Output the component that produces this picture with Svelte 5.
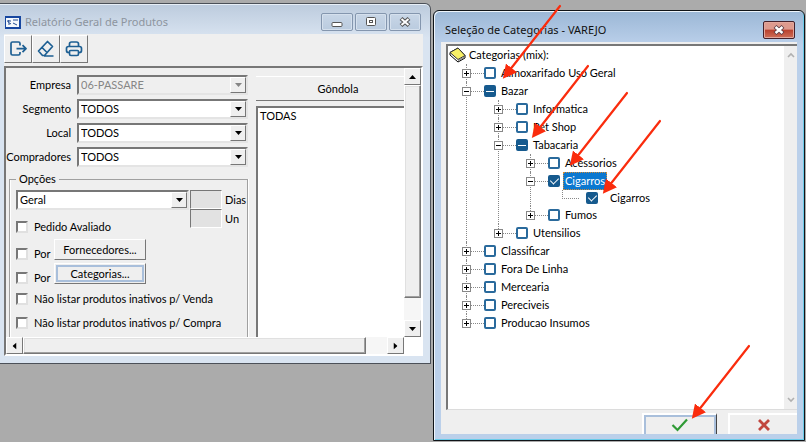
<script>
  const filters = [
    { id: 'empresa', label: 'Empresa', value: '06-PASSARE', disabled: true },
    { id: 'segmento', label: 'Segmento', value: 'TODOS' },
    { id: 'local', label: 'Local', value: 'TODOS' },
    { id: 'compradores', label: 'Compradores', value: 'TODOS' }
  ];

  const tree = [
    { name: 'Almoxarifado Uso Geral' },
    {
      name: 'Bazar', open: true, state: 'some',
      children: [
        { name: 'Informatica' },
        { name: 'Pet Shop' },
        {
          name: 'Tabacaria', open: true, state: 'some',
          children: [
            { name: 'Acessorios' },
            {
              name: 'Cigarros', open: true, state: 'all', selected: true,
              children: [{ name: 'Cigarros', state: 'all', leaf: true }]
            },
            { name: 'Fumos' }
          ]
        },
        { name: 'Utensilios' }
      ]
    },
    { name: 'Classificar' },
    { name: 'Fora De Linha' },
    { name: 'Mercearia' },
    { name: 'Pereciveis' },
    { name: 'Producao Insumos' }
  ];

  // Shaft of each arrow; the head extends past its end.
  const arrows = [
    [560, 6, 509, 71],
    [588, 66, 538, 130],
    [627, 93, 576, 158],
    [660, 121, 609, 186],
    [749, 346, 698, 411]
  ];
</script>

{#snippet triangle(dir)}
  <svg class="tri {dir}" viewBox="0 0 7 4" width="7" height="4" aria-hidden="true"><path d="M0 0h7L3.5 4z" fill="currentColor" /></svg>
{/snippet}

{#snippet combo(id, value, disabled)}
  <span class="combo" class:disabled>
    <select {id} {disabled} aria-label={id === 'tipo' ? 'Tipo' : undefined}><option>{value}</option></select>
    <span class="drop">{@render triangle('down')}</span>
  </span>
{/snippet}

{#snippet branch(nodes)}
  <ul>
    {#each nodes as node}
      <li class:leaf={node.leaf}>
        <div class="node">
          {#if !node.leaf}
            <button class="expander" aria-label={node.open ? 'Recolher' : 'Expandir'}>
              <svg viewBox="0 0 7 7" width="7" height="7"><path d={node.open ? 'M1 3.5h5' : 'M1 3.5h5M3.5 1v5'} stroke="#000" /></svg>
            </button>
          {/if}
          <span class="link"></span>
          <label>
            <input type="checkbox" class="mark" class:some={node.state === 'some'} checked={node.state === 'all'} indeterminate={node.state === 'some'} />
            <span class="name" class:selected={node.selected}>{node.name}</span>
          </label>
        </div>
        {#if node.children}{@render branch(node.children)}{/if}
      </li>
    {/each}
  </ul>
{/snippet}

<main class="desktop">
  <section class="window report">
    <header>
      <svg width="16" height="13" viewBox="0 0 16 13" aria-hidden="true">
        <rect width="16" height="13" fill="#1747a0" /><rect x="1" y="2" width="13" height="9" fill="#f5f9fd" />
        <path d="M2 5h4M8 4h5M3 8h2M4 4l-1 2 3 2M8 7l4 2" stroke="#234b91" fill="none" />
      </svg>
      <h1>Relatório Geral de Produtos</h1>
      <div class="controls">
        <button aria-label="Minimizar"><svg width="12" height="12" viewBox="0 0 12 12"><rect x="1" y="6.5" width="10" height="4" rx="1" fill="#fff" stroke="#555" /></svg></button>
        <button aria-label="Maximizar"><svg width="12" height="12" viewBox="0 0 12 12"><rect x="1.5" y="1.5" width="9" height="8" rx="1" fill="#fff" stroke="#555" /><rect x="4.5" y="4.5" width="3" height="2" fill="#fff" stroke="#555" /></svg></button>
        <button aria-label="Fechar"><svg width="12" height="12" viewBox="0 0 12 12"><path d="M2 2.500l8 7M10 2.500l-8 7" stroke="#555" stroke-width="4.200" /><path d="M2.500 3l7 6M9.500 3l-7 6" stroke="#fff" stroke-width="2" /></svg></button>
      </div>
    </header>

    <div class="panel">
      <div class="toolbar">
        <button aria-label="Sair"><svg width="18" height="18" viewBox="0 0 18 18"><path d="M11 5.500V3.500Q11 2 9.500 2H3.500Q2 2 2 3.500V13.500Q2 15 3.500 15H9.500Q11 15 11 13.500V12M7.500 8.700H17M13.500 5.200L17 8.700L13.500 12.200" /></svg></button>
        <button aria-label="Limpar"><svg width="18" height="18" viewBox="0 0 18 18"><path d="M1.500 11L10.500 1.500L15.500 6.500L7.500 15.500H5.500L1.500 11ZM5 7.500L10.500 13M7 16H16.500" /></svg></button>
        <button aria-label="Imprimir"><svg width="18" height="18" viewBox="0 0 18 18"><path d="M4.500 6.500V4Q4.500 2 6.500 2H11.500Q13.500 2 13.500 4V6.500M4.500 12.500H3.500Q1.500 12.500 1.500 10.500V8.500Q1.500 6.500 3.500 6.500H14.500Q16.500 6.500 16.500 8.500V10.500Q16.500 12.500 14.500 12.500H13.500M5.500 10.500H12.500Q13.500 10.500 13.500 11.500V14Q13.500 15.500 12 15.500H6Q4.500 15.500 4.500 14V11.500Q4.500 10.500 5.500 10.500Z" /></svg></button>
      </div>

      <div class="scroller">
        <div class="view">
          <form class="form">
            <div class="filters">
              {#each filters as f}
                <label for={f.id}>{f.label}</label>
                {@render combo(f.id, f.value, f.disabled)}
              {/each}
            </div>
            <fieldset>
              <legend>Opções</legend>
              <div class="period">
                <div class="kind">
                  {@render combo('tipo', 'Geral', false)}
                  <label class="check"><input type="checkbox" />Pedido Avaliado</label>
                </div>
                <div class="units">
                  <label><input type="text" disabled />Dias</label>
                  <label><input type="text" disabled />Un</label>
                </div>
              </div>
              <div class="by"><label class="check"><input type="checkbox" />Por</label><button type="button">Fornecedores...</button></div>
              <div class="by"><label class="check"><input type="checkbox" />Por</label><button type="button" class="focused">Categorias...</button></div>
              <label class="check"><input type="checkbox" />Não listar produtos inativos p/ Venda</label>
              <label class="check"><input type="checkbox" />Não listar produtos inativos p/ Compra</label>
            </fieldset>
          </form>
          <div class="shelf">
            <h2>Gôndola</h2>
            <div class="list">TODAS</div>
          </div>
        </div>
        <div class="bar vertical">
          <button aria-label="Subir">{@render triangle('up')}</button>
          <div class="thumb"></div>
          <button aria-label="Descer">{@render triangle('down')}</button>
        </div>
        <div class="bar horizontal">
          <button aria-label="Esquerda">{@render triangle('left')}</button>
          <div class="thumb"></div>
          <button aria-label="Direita">{@render triangle('right')}</button>
        </div>
      </div>
    </div>
  </section>

  <section class="window dialog">
    <header>
      <h1>Seleção de Categorias - VAREJO</h1>
      <div class="controls">
        <button class="close" aria-label="Fechar"><svg width="12" height="12" viewBox="0 0 12 12"><path d="M2 2.500l8 7M10 2.500l-8 7" stroke="#5c3c44" stroke-width="4.200" /><path d="M2.500 3l7 6M9.500 3l-7 6" stroke="#fff" stroke-width="2.400" /></svg></button>
      </div>
    </header>
    <div class="panel">
      <div class="treebox">
        <div class="tree">
          <div class="root">
            <svg width="17" height="16" viewBox="0 0 17 16" aria-hidden="true">
              <path d="M1 5.500L9 1L16 8.500V11L9 15L1 8z" fill="#fff" stroke="#000" />
              <path d="M1 5.500L9 1L16 8.500L9 12.500z" fill="#f7ef67" stroke="#333" /><path d="M9 13.500L16 10" stroke="#777" />
            </svg>
            <span>Categorias (mix):</span>
          </div>
          {@render branch(tree)}
        </div>
        <div class="rail">
          <svg width="8" height="6" viewBox="0 0 8 6"><path d="M1 5l3-3 3 3" /></svg>
          <svg width="8" height="6" viewBox="0 0 8 6"><path d="M1 1l3 3 3-3" /></svg>
        </div>
      </div>
      <footer>
        <button class="ok" aria-label="Confirmar"><svg width="18" height="14" viewBox="0 0 18 14"><path d="M1.500 7L6.500 12L16 1.500" stroke="#2f9a35" stroke-width="2.200" fill="none" /></svg></button>
        <button class="cancel" aria-label="Cancelar"><svg width="14" height="14" viewBox="0 0 14 14"><path d="M2 2l10 10M12 2L2 12" stroke="#c1463f" stroke-width="2.800" /></svg></button>
      </footer>
    </div>
  </section>

  <svg class="arrows" width="806" height="442" viewBox="0 0 806 442" aria-hidden="true">
    <defs>
      <marker id="head" markerUnits="userSpaceOnUse" markerWidth="14" markerHeight="14" refX="4" refY="7" orient="auto"><path d="M0 0L14 7L0 14z" fill="#fa2c0d" /></marker>
    </defs>
    {#each arrows as [x1, y1, x2, y2]}
      <line {x1} {y1} {x2} {y2} marker-end="url(#head)" />
    {/each}
  </svg>
</main>

<style>
  :global(body) { background: #ababab; }
  * { box-sizing: border-box; }
  .desktop {
    position: relative;
    display: grid;
    grid-template-columns: 431fr 372fr;
    gap: 2px;
    align-items: start;
    min-height: 100vh;
    padding-right: 1px;
    overflow: hidden;
    background: #ababab;
    color: #000;
    font: 11px/16px Lato, "Liberation Sans", sans-serif;
  }
  button, select, input { font: inherit; color: inherit; margin: 0; padding: 0; border-radius: 0; }
  button { display: flex; align-items: center; justify-content: center; border: 0; background: #efefef; }
  svg { display: block; flex: none; }
  h1, h2 { margin: 0; font-weight: 400; white-space: nowrap; }

  .window { display: flex; flex-direction: column; min-width: 0; }
  header { display: flex; align-items: center; height: 30px; }
  h1 { font: 11px/18px "Noto Sans", sans-serif; }
  .controls { display: flex; gap: 2px; margin-left: auto; }
  .controls button {
    width: 32px; height: 18px;
    border: 1px solid #8496ae; border-radius: 2px;
    background: linear-gradient(#c8d6e7, #bacbdf);
    box-shadow: inset 0 0 0 1px #d5e0ed;
  }
  .controls .close {
    border-color: #43202a;
    background: linear-gradient(#dd9a8e 0 45%, #b9402d 50%, #cf6f58);
    box-shadow: inset 0 0 0 1px #e2a79d;
  }

  .report {
    margin-top: 3px;
    border: solid #4b5058; border-width: 1px 1px 1px 0;
    border-radius: 0 6px 0 0;
    background: linear-gradient(#bccbdd, #d9e4f1 34px);
    box-shadow: inset 0 1px #e8eff7;
  }
  .report header { gap: 4px; padding: 6px 1px 0 5px; }
  .report .controls { padding-right: 8px; }
  .report h1 { color: #8d959f; }
  .report .panel { margin: 0 7px 7px 4px; background: #efefef; }

  .toolbar { display: flex; height: 32px; padding-top: 1px; }
  .toolbar button {
    width: 28px; height: 28px;
    border: solid; border-width: 1px; border-color: #fff #777 #777 #fff;
  }
  .toolbar path { fill: none; stroke: #1d5f93; stroke-width: 1.700; stroke-linejoin: round; }

  .scroller {
    display: grid;
    grid-template-columns: 1fr 17px;
    grid-template-rows: 269px 17px;
    border: 2px solid #777; border-color: #777 #fff #fff #777;
    background: #fff;
  }
  .view { display: flex; gap: 8px; overflow: hidden; padding: 7px 0 0 3px; background: #efefef; min-width: 0; }
  .form { flex: 0 0 239px; min-width: 0; }
  .filters { display: grid; grid-template-columns: 62px 1fr; gap: 4px 6px; align-items: center; }
  .filters label { justify-self: end; }

  .combo { display: flex; height: 20px; border: 2px solid #777; border-color: #777 #e4e4e4 #e4e4e4 #777; background: #fff; }
  .combo select { flex: 1; min-width: 0; padding-left: 2px; border: 0; background: transparent; appearance: none; opacity: 1; }
  .disabled { background: #efefef; }
  .disabled select, .disabled .drop { color: #868686; }
  .drop { display: flex; width: 16px; align-items: center; justify-content: center; border: 1px solid #777; border-color: #fff #777 #777 #fff; background: #efefef; }

  fieldset { min-width: 0; height: 190px; margin: 5px 0 0; padding: 4px 0 0 6px; border: 1px solid #a0a0a0; box-shadow: inset 1px 0 #fff, 1px 0 #fff; }
  legend { margin-left: 0; padding: 0 3px; line-height: 14px; }
  .period { display: flex; gap: 1px; height: 49px; }
  .kind { flex: 0 0 173px; }
  .kind .check { margin-top: 8px; }
  .units label { display: flex; align-items: center; gap: 3px; height: 19px; }
  .units input { width: 32px; height: 19px; border: 1px solid #777; border-color: #777 #fff #fff #777; background: #e2e2e2; }
  .check { display: flex; align-items: center; gap: 6px; height: 18px; margin-top: 6px; white-space: nowrap; }
  .check input { appearance: none; width: 12px; height: 12px; border: 2px solid #777; border-color: #777 #e0e0e0 #e0e0e0 #777; background: #fff; }
  .by { display: flex; align-items: flex-end; height: 21px; margin-bottom: 3px; }
  .by .check { width: 38px; height: 13px; margin: 0; }
  .by button { width: 92px; height: 21px; border: 1px solid #777; border-color: #fff #777 #777 #fff; }
  .by .focused { box-shadow: inset 0 0 0 1px #efefef, inset 0 0 0 3px #a9bfdb; }

  .shelf { display: flex; flex: 1; flex-direction: column; min-width: 0; }
  h2 { margin-top: 1px; border: solid; border-width: 1px 0; border-color: #fff #777 #777; font-size: 11px; line-height: 23px; text-align: center; padding-left: 16px; }
  .list { flex: 1; margin-top: 5px; padding: 0 2px; border: solid #777; border-width: 2px 0 0 2px; background: #fff; }

  .bar { display: flex; background: #f6f6f6; }
  .vertical { flex-direction: column; }
  .horizontal { grid-row: 2; }
  .bar button, .thumb { border: 1px solid #777; border-color: #fff #777 #777 #fff; background: #efefef; }
  .bar button { flex: 0 0 17px; }
  .thumb { box-shadow: inset -1px -1px #a0a0a0, inset 1px 1px #e0e0e0; }
  .vertical .thumb { flex: 213; margin-bottom: 22px; }
  .horizontal .thumb { flex: 1; margin-right: 21px; }
  .up { transform: rotate(180deg); }
  .left { transform: rotate(90deg); }
  .right { transform: rotate(-90deg); }

  .dialog {
    height: calc(100vh - 11px);
    margin-top: 10px;
    padding: 1px 7px 6px;
    border: 1px solid #101418; border-radius: 6px 6px 0 0;
    background: linear-gradient(#9bb7d6, #bbd0ea 34px);
    box-shadow: inset 1px 1px #eef5fc, inset -1px -1px #69cbe9;
  }
  .dialog header { flex: none; padding: 5px 2px 0 4px; }
  .dialog h1 { color: #111; }
  .dialog .panel { display: flex; flex: 1; flex-direction: column; min-height: 0; padding: 2px 0 0 5px; background: #efefef; }
  .treebox { display: flex; flex: 1; min-height: 0; border: solid; border-width: 2px 0 1px 2px; border-color: #777 #777 #dcdcdc; background: #fff; }
  .tree { flex: 1; min-width: 0; overflow: hidden; }
  .root { display: flex; align-items: center; gap: 3px; height: 18px; padding-left: 1px; }
  .tree > :global(ul) { padding-left: 14px; }
  ul { margin: 0; padding: 0 0 0 32px; list-style: none; }
  li { position: relative; }
  li::before { content: ""; position: absolute; top: 0; bottom: 0; left: 4px; border-left: 1px dotted #888; }
  li:last-child::before { bottom: auto; height: 9px; }
  .node { position: relative; display: flex; align-items: center; height: 18px; }
  .leaf .node { height: 16px; }
  .expander { width: 9px; height: 9px; border: 1px solid #888; background: #fff; }
  .link { width: 13px; border-top: 1px dotted #888; }
  .leaf .link { width: 17px; margin: 0 7px 0 4px; }
  .node label { display: flex; align-items: center; gap: 3px; }
  .leaf label { gap: 10px; }
  .mark { display: grid; appearance: none; width: 12px; height: 12px; border: 2px solid #2a6a9c; border-radius: 2px; background: #fff; }
  .mark:checked, .some { background: #165a8e; border-color: #165a8e; }
  .mark:checked::after { content: ""; width: 4px; height: 7px; margin: -1px 0 0 2px; border: solid #fff; border-width: 0 1px 1px 0; transform: rotate(45deg); }
  .some::after { content: ""; height: 1px; align-self: center; background: #fff; }
  .name { padding: 0 2px; line-height: 18px; white-space: nowrap; }
  .leaf .name { line-height: 16px; }
  .selected { background: #0b78d0; color: #fff; outline: 1px dotted #d08b3a; outline-offset: -1px; }
  .rail { display: flex; flex: 0 0 13px; flex-direction: column; align-items: center; justify-content: space-between; padding: 6px 0; background: #efefef; }
  .rail path { fill: none; stroke: #b0b0b0; stroke-width: 1.600; }

  footer { display: flex; flex: none; justify-content: flex-end; gap: 11px; height: 24px; padding-top: 3px; }
  footer button { border: solid #fff; border-width: 2px 0 0 2px; }
  .ok { width: 75px; border-right: 1px solid #444; box-shadow: inset 2px 2px #a9bfdb, inset -2px 0 #a9bfdb; }
  .cancel { width: 69px; }

  .arrows { position: absolute; top: 0; left: 0; pointer-events: none; }
  line { stroke: #fa2c0d; stroke-width: 2.200; stroke-linecap: round; }
</style>
